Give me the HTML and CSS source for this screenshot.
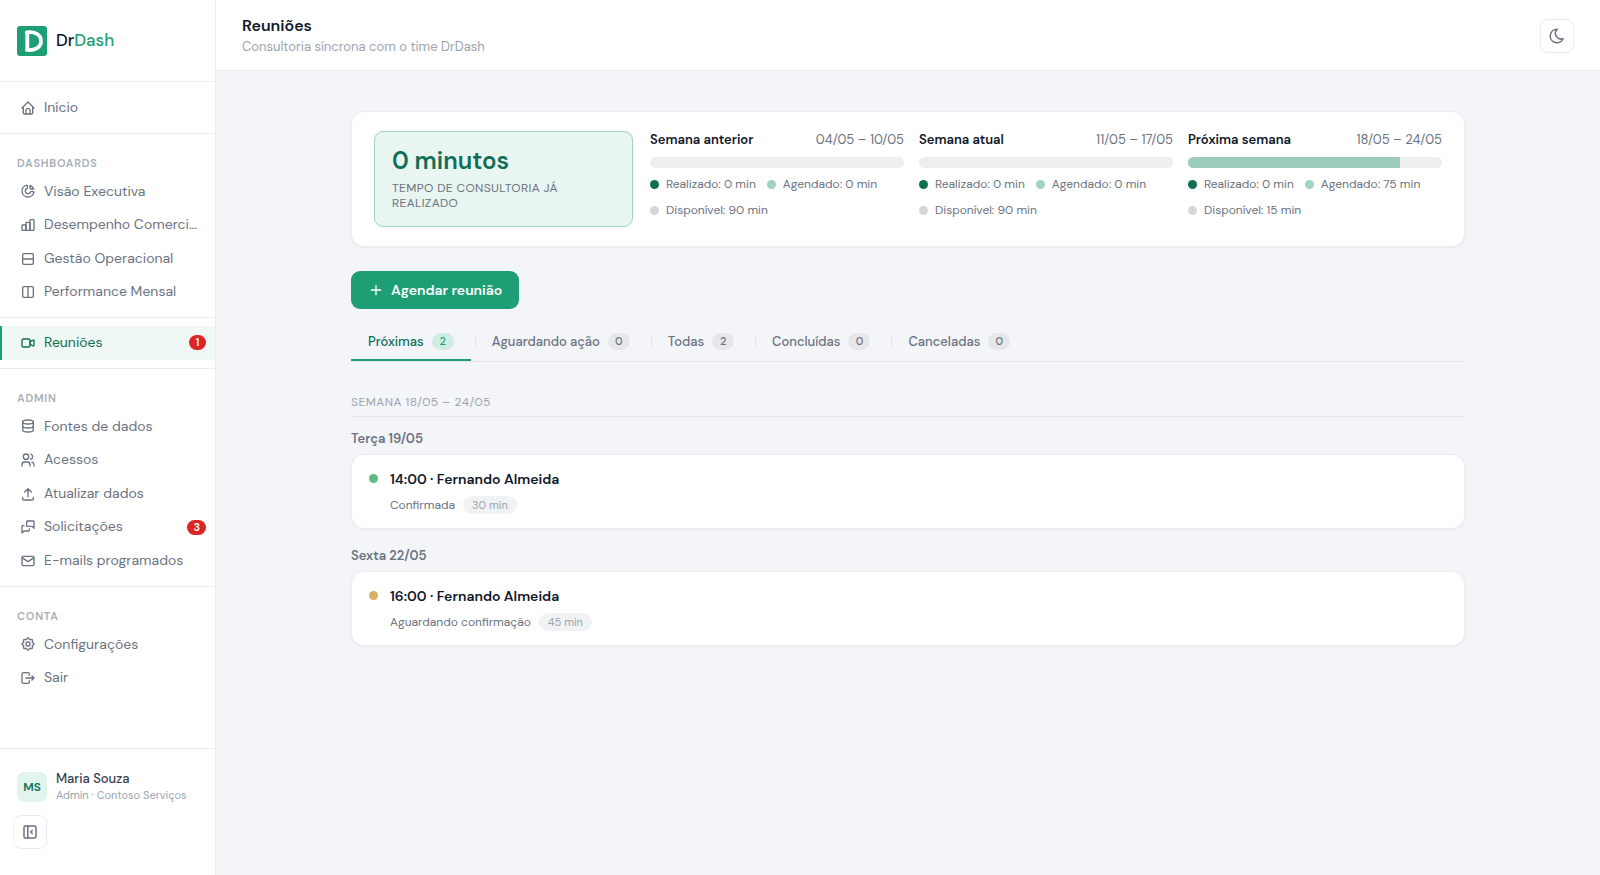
FILE: index.html
```html
<!DOCTYPE html>
<html lang="pt-BR">
<head>
<meta charset="utf-8">
<meta name="viewport" content="width=device-width, initial-scale=1">
<title>Reuniões · DrDash</title>
<link rel="stylesheet" href="styles.css">
</head>
<body>
<div class="app">
  <aside class="sidebar">
    <a class="brand" href="#">
      <svg class="brand-mark" viewBox="0 0 30 30" aria-hidden="true">
        <rect width="30" height="30" rx="3" fill="#1d9e75"/>
        <path d="M10.300 7v16.500M9.600 6.300C18 5.300 24 8.500 24 14.900C24 21.300 18 24.800 9.900 23.900" fill="none" stroke="#fff" stroke-width="3.800" stroke-linecap="round" stroke-linejoin="round"/>
      </svg>
      <span class="brand-name">Dr<span class="brand-accent">Dash</span></span>
    </a>
    <nav class="nav" aria-label="Principal">
      <a class="nav-item" href="#"><svg class="icon" viewBox="0 0 24 24"><path d="M5 12H3l9-9 9 9h-2"/><path d="M5 12v7a2 2 0 0 0 2 2h10a2 2 0 0 0 2-2v-7"/><path d="M9 21v-6a2 2 0 0 1 2-2h2a2 2 0 0 1 2 2v6"/></svg><span class="nav-text">Início</span></a>
      <hr class="divider">
      <h2 class="nav-label">Dashboards</h2>
      <a class="nav-item" href="#"><svg class="icon" viewBox="0 0 24 24"><path d="M10 3.200A9 9 0 1 0 20.800 14a1 1 0 0 0-1-1H16a4.100 4.100 0 1 1-5-5V4a.9.9 0 0 0-1-.8"/><path d="M15 3.500A9 9 0 0 1 20.500 9H16a9 9 0 0 0-1-1z"/></svg><span class="nav-text">Visão Executiva</span></a>
      <a class="nav-item" href="#"><svg class="icon" viewBox="0 0 24 24"><rect x="3" y="12" width="6" height="8" rx="1"/><rect x="9" y="8" width="6" height="12" rx="1"/><rect x="15" y="4" width="6" height="16" rx="1"/></svg><span class="nav-text">Desempenho Comercial</span></a>
      <a class="nav-item" href="#"><svg class="icon" viewBox="0 0 24 24"><rect x="4" y="4" width="16" height="16" rx="2"/><path d="M4 12h16"/></svg><span class="nav-text">Gestão Operacional</span></a>
      <a class="nav-item" href="#"><svg class="icon" viewBox="0 0 24 24"><rect x="4" y="4" width="16" height="16" rx="2"/><path d="M12 4v16"/></svg><span class="nav-text">Performance Mensal</span></a>
      <hr class="divider">
      <a class="nav-item is-active" href="#" aria-current="page"><svg class="icon" viewBox="0 0 24 24"><path d="M15 10l4.553-2.276A1 1 0 0 1 21 8.618v6.764a1 1 0 0 1-1.447.894L15 14z"/><rect x="3" y="6" width="12" height="12" rx="2"/></svg><span class="nav-text">Reuniões</span><span class="alert">1</span></a>
      <hr class="divider">
      <h2 class="nav-label">Admin</h2>
      <a class="nav-item" href="#"><svg class="icon" viewBox="0 0 24 24"><ellipse cx="12" cy="6" rx="8" ry="3"/><path d="M4 6v6c0 1.657 3.582 3 8 3s8-1.343 8-3V6"/><path d="M4 12v6c0 1.657 3.582 3 8 3s8-1.343 8-3v-6"/></svg><span class="nav-text">Fontes de dados</span></a>
      <a class="nav-item" href="#"><svg class="icon" viewBox="0 0 24 24"><circle cx="9" cy="7" r="4"/><path d="M3 21v-2a4 4 0 0 1 4-4h4a4 4 0 0 1 4 4v2M16 3.130a4 4 0 0 1 0 7.750M21 21v-2a4 4 0 0 0-3-3.850"/></svg><span class="nav-text">Acessos</span></a>
      <a class="nav-item" href="#"><svg class="icon" viewBox="0 0 24 24"><path d="M4 17v2a2 2 0 0 0 2 2h12a2 2 0 0 0 2-2v-2M7 9l5-5 5 5M12 4v12"/></svg><span class="nav-text">Atualizar dados</span></a>
      <a class="nav-item" href="#"><svg class="icon" viewBox="0 0 24 24"><path d="M21 14l-3-3h-7a1 1 0 0 1-1-1V4a1 1 0 0 1 1-1h9a1 1 0 0 1 1 1v10"/><path d="M14 15v2a1 1 0 0 1-1 1H6l-3 3V11a1 1 0 0 1 1-1h2"/></svg><span class="nav-text">Solicitações</span><span class="alert">3</span></a>
      <a class="nav-item" href="#"><svg class="icon" viewBox="0 0 24 24"><rect x="3" y="5" width="18" height="14" rx="2"/><path d="M3 7l9 6 9-6"/></svg><span class="nav-text">E-mails programados</span></a>
      <hr class="divider">
      <h2 class="nav-label">Conta</h2>
      <a class="nav-item" href="#"><svg class="icon" viewBox="0 0 24 24"><path d="M10.325 4.317c.426-1.756 2.924-1.756 3.350 0a1.724 1.724 0 0 0 2.573 1.066c1.543-.94 3.310.826 2.370 2.370a1.724 1.724 0 0 0 1.065 2.572c1.756.426 1.756 2.924 0 3.350a1.724 1.724 0 0 0-1.066 2.573c.94 1.543-.826 3.310-2.370 2.370a1.724 1.724 0 0 0-2.572 1.065c-.426 1.756-2.924 1.756-3.350 0a1.724 1.724 0 0 0-2.573-1.066c-1.543.94-3.310-.826-2.370-2.370a1.724 1.724 0 0 0-1.065-2.572c-1.756-.426-1.756-2.924 0-3.350a1.724 1.724 0 0 0 1.066-2.573c-.94-1.543.826-3.310 2.370-2.370 1 .608 2.296.07 2.572-1.065z"/><circle cx="12" cy="12" r="3"/></svg><span class="nav-text">Configurações</span></a>
      <a class="nav-item" href="#"><svg class="icon" viewBox="0 0 24 24"><path d="M14 8V6a2 2 0 0 0-2-2H5a2 2 0 0 0-2 2v12a2 2 0 0 0 2 2h7a2 2 0 0 0 2-2v-2M9 12h12l-3-3M18 15l3-3"/></svg><span class="nav-text">Sair</span></a>
    </nav>
    <div class="sidebar-foot">
      <div class="user">
        <span class="avatar">MS</span>
        <div class="user-info">
          <div class="user-name">Maria Souza</div>
          <div class="user-role">Admin · Contoso Serviços</div>
        </div>
      </div>
      <button class="icon-button" type="button" aria-label="Recolher menu"><svg class="icon" viewBox="0 0 24 24"><rect x="4" y="4" width="16" height="16" rx="2"/><path d="M9 4v16M15 10l-2 2 2 2"/></svg></button>
    </div>
  </aside>

  <div class="page">
    <header class="topbar">
      <div>
        <h1 class="page-title">Reuniões</h1>
        <p class="page-subtitle">Consultoria síncrona com o time DrDash</p>
      </div>
      <button class="icon-button" type="button" aria-label="Alternar tema"><svg class="icon" viewBox="0 0 24 24"><path d="M12 3h.393a7.500 7.500 0 0 0 7.920 12.446A9 9 0 1 1 12 2.992z"/></svg></button>
    </header>

    <main class="content">
      <section class="card summary">
        <div class="total">
          <div class="total-value">0 minutos</div>
          <div class="total-label">Tempo de consultoria já realizado</div>
        </div>
        <div class="weeks">
          <div class="week">
            <div class="week-head"><h3 class="week-name">Semana anterior</h3><span class="week-range">04/05 – 10/05</span></div>
            <div class="bar"></div>
            <ul class="legend"><li class="legend-item"><i class="dot dot-done"></i>Realizado: 0 min</li><li class="legend-item"><i class="dot dot-booked"></i>Agendado: 0 min</li><li class="legend-item"><i class="dot dot-free"></i>Disponível: 90 min</li></ul>
          </div>
          <div class="week">
            <div class="week-head"><h3 class="week-name">Semana atual</h3><span class="week-range">11/05 – 17/05</span></div>
            <div class="bar"></div>
            <ul class="legend"><li class="legend-item"><i class="dot dot-done"></i>Realizado: 0 min</li><li class="legend-item"><i class="dot dot-booked"></i>Agendado: 0 min</li><li class="legend-item"><i class="dot dot-free"></i>Disponível: 90 min</li></ul>
          </div>
          <div class="week">
            <div class="week-head"><h3 class="week-name">Próxima semana</h3><span class="week-range">18/05 – 24/05</span></div>
            <div class="bar"><div class="bar-fill" style="width:83.33%"></div></div>
            <ul class="legend"><li class="legend-item"><i class="dot dot-done"></i>Realizado: 0 min</li><li class="legend-item"><i class="dot dot-booked"></i>Agendado: 75 min</li><li class="legend-item"><i class="dot dot-free"></i>Disponível: 15 min</li></ul>
          </div>
        </div>
      </section>

      <button class="primary" type="button"><svg class="icon" viewBox="0 0 24 24"><path d="M12 5v14M5 12h14"/></svg>Agendar reunião</button>

      <div class="tabs" role="tablist">
        <button class="tab is-selected" type="button" role="tab" aria-selected="true">Próximas<span class="count">2</span></button>
        <button class="tab" type="button" role="tab" aria-selected="false">Aguardando ação<span class="count">0</span></button>
        <button class="tab" type="button" role="tab" aria-selected="false">Todas<span class="count">2</span></button>
        <button class="tab" type="button" role="tab" aria-selected="false">Concluídas<span class="count">0</span></button>
        <button class="tab" type="button" role="tab" aria-selected="false">Canceladas<span class="count">0</span></button>
      </div>

      <h2 class="week-title">Semana 18/05 – 24/05</h2>
      <section class="day">
        <h3 class="day-title">Terça 19/05</h3>
        <article class="card meeting">
          <i class="dot dot-confirmed"></i>
          <div>
            <h4 class="meeting-title">14:00 · Fernando Almeida</h4>
            <div class="meeting-meta">Confirmada<span class="duration">30 min</span></div>
          </div>
        </article>
      </section>
      <section class="day">
        <h3 class="day-title">Sexta 22/05</h3>
        <article class="card meeting">
          <i class="dot dot-pending"></i>
          <div>
            <h4 class="meeting-title">16:00 · Fernando Almeida</h4>
            <div class="meeting-meta">Aguardando confirmação<span class="duration">45 min</span></div>
          </div>
        </article>
      </section>
    </main>
  </div>
</div>
</body>
</html>
```

FILE: styles.css
```css
:root {
  --green: #1d9e75;
  --green-dark: #0f6e56;
  --ink: #0f172a;
  --text: #6b7280;
  --muted: #9ca3af;
  --line: #ebedef;
  --bg: #f3f5f9;
}

* { box-sizing: border-box; }

body {
  margin: 0;
  background: var(--bg);
  color: var(--text);
  font-family: "DM Sans", Inter, "Open Sans", sans-serif;
  font-size: 14px;
  line-height: 1.4;
}

h1, h2, h3, h4, p, ul { margin: 0; padding: 0; }
ul { list-style: none; }
a { color: inherit; text-decoration: none; }
button { font: inherit; color: inherit; cursor: pointer; }

.app { display: flex; min-height: 100vh; }

.icon {
  width: 16px;
  height: 16px;
  flex: none;
  fill: none;
  stroke: currentColor;
  stroke-width: 2;
  stroke-linecap: round;
  stroke-linejoin: round;
}

/* Sidebar */
.sidebar {
  display: flex;
  flex-direction: column;
  flex: none;
  width: 216px;
  background: #fff;
  border-right: 1px solid var(--line);
}

.brand {
  display: flex;
  align-items: center;
  gap: 9px;
  padding: 26px 17px 25px;
  border-bottom: 1px solid var(--line);
}
.brand-mark { width: 30px; height: 30px; }
.brand-name { color: var(--ink); font-size: 17px; font-weight: 500; }
.brand-accent { color: var(--green); }

.nav { flex: 1; padding-top: 9px; }

.nav-item {
  display: flex;
  align-items: center;
  gap: 8px;
  padding: 7px 9px 7px 18px;
  border-left: 2px solid transparent;
}
.nav-text {
  flex: 1;
  overflow: hidden;
  padding-right: 7px;
  text-overflow: ellipsis;
  white-space: nowrap;
}
.nav-item.is-active {
  color: var(--green-dark);
  background: #f0f8f5;
  border-left-color: var(--green);
}

.alert {
  min-width: 17px;
  padding: 0 6px;
  border-radius: 8px;
  background: #dc2626;
  color: #fff;
  font-size: 11px;
  font-weight: 600;
  line-height: 15px;
  text-align: center;
}

.divider { margin: 8px 0; border: 0; border-top: 1px solid var(--line); }

.nav-label {
  padding: 14px 17px 5px;
  color: #a7adb7;
  font-size: 11px;
  font-weight: 600;
  line-height: 14px;
  letter-spacing: 0.07em;
  text-transform: uppercase;
}

.sidebar-foot {
  padding: 22px 13px 26px;
  border-top: 1px solid var(--line);
}
.user { display: flex; align-items: center; gap: 9px; padding: 0 4px; margin-bottom: 12px; }
.avatar {
  display: grid;
  place-items: center;
  flex: none;
  width: 30px;
  height: 30px;
  border-radius: 7px;
  background: #e1f5ee;
  color: var(--green-dark);
  font-size: 12px;
  font-weight: 600;
}
.user-info { line-height: 16px; white-space: nowrap; }
.user-name { color: #374151; font-size: 13px; font-weight: 500; }
.user-role { color: var(--muted); font-size: 11px; }

.icon-button {
  display: grid;
  place-items: center;
  width: 34px;
  height: 34px;
  padding: 0;
  border: 1px solid var(--line);
  border-radius: 8px;
  background: #fff;
}
.icon-button .icon { width: 18px; height: 18px; }

/* Top bar */
.page { flex: 1; min-width: 0; }
.topbar {
  display: flex;
  align-items: center;
  justify-content: space-between;
  padding: 15px 26px 14px;
  background: #fff;
  border-bottom: 1px solid var(--line);
}
.page-title { color: var(--ink); font-size: 16px; font-weight: 600; line-height: 22px; }
.page-subtitle { margin-top: 1px; color: var(--muted); font-size: 13px; line-height: 18px; }

.content { max-width: 1166px; margin: 0 auto; padding: 40px 26px; }

.card {
  background: #fff;
  border: 1px solid var(--line);
  border-radius: 13px;
  box-shadow: 0 1px 3px rgba(15, 23, 42, 0.05);
}

/* Summary */
.summary {
  display: grid;
  grid-template-columns: 259px 1fr;
  gap: 17px;
  margin-bottom: 24px;
  padding: 19px 22px;
}
.total {
  padding: 12px 17px 15px;
  border: 1px solid #9fd4c0;
  border-radius: 9px;
  background: #e8f5f0;
}
.total-value { color: var(--green-dark); font-size: 24px; font-weight: 600; line-height: 34px; }
.total-label {
  margin-top: 3px;
  font-size: 12px;
  line-height: 15px;
  letter-spacing: 0.03em;
  text-transform: uppercase;
}
.weeks { display: grid; grid-template-columns: repeat(3, 1fr); gap: 15px; }
.week-head { display: flex; justify-content: space-between; font-size: 13px; line-height: 18px; }
.week-name { color: var(--ink); font-size: 13px; font-weight: 600; }
.bar {
  height: 11px;
  margin: 8px 0 7px;
  overflow: hidden;
  border-radius: 6px;
  background: #eee;
}
.bar-fill { height: 100%; background: #9bcdba; }
.legend {
  display: flex;
  flex-wrap: wrap;
  gap: 8px 11px;
  font-size: 12px;
  line-height: 18px;
}
.legend-item { display: flex; align-items: center; gap: 7px; }

.dot { flex: none; width: 9px; height: 9px; border-radius: 50%; }
.dot-done { background: var(--green-dark); }
.dot-booked { background: #9fd4c0; }
.dot-free { background: #d6d6d6; }
.dot-confirmed { background: #5fbb80; }
.dot-pending { background: #d9b063; }

.primary {
  display: inline-flex;
  align-items: center;
  gap: 7px;
  padding: 9px 17px;
  border: 0;
  border-radius: 9px;
  background: var(--green);
  color: #fff;
  font-weight: 600;
  line-height: 20px;
}

/* Tabs */
.tabs {
  display: flex;
  gap: 4px;
  margin-top: 14px;
  border-bottom: 1px solid #e2e5e9;
}
.tab {
  position: relative;
  display: flex;
  align-items: center;
  gap: 8px;
  padding: 10px 17px 9px;
  border: 0;
  border-bottom: 2px solid transparent;
  background: none;
  font-size: 13px;
  font-weight: 500;
  line-height: 17px;
}
.tab + .tab::before {
  position: absolute;
  left: 0;
  width: 1px;
  height: 12px;
  background: #e2e5e9;
  content: "";
}
.tab.is-selected { color: var(--green-dark); border-bottom-color: var(--green); }
.count {
  min-width: 22px;
  padding: 0 7px;
  border-radius: 9px;
  background: #e5e7eb;
  font-size: 11px;
  text-align: center;
}
.is-selected .count { background: #d0ede3; color: var(--green); }

/* Meetings */
.week-title {
  margin-top: 31px;
  padding: 0 0 5px;
  border-bottom: 1px solid #e5e8ec;
  color: var(--muted);
  font-size: 12px;
  font-weight: 400;
  line-height: 18px;
  letter-spacing: 0.04em;
  text-transform: uppercase;
}
.day { margin-top: 13px; }
.day + .day { margin-top: 18px; }
.day-title { margin-bottom: 6px; font-size: 13px; font-weight: 600; line-height: 18px; }
.meeting { display: flex; align-items: flex-start; gap: 12px; padding: 14px 17px; }
.meeting .dot { margin-top: 5px; }
.meeting-title { color: var(--ink); font-size: 14px; font-weight: 600; line-height: 20px; }
.meeting-meta {
  display: flex;
  align-items: center;
  gap: 8px;
  margin-top: 7px;
  font-size: 12px;
  line-height: 18px;
}
.duration {
  padding: 0 9px;
  border-radius: 9px;
  background: #f1f2f3;
  color: var(--muted);
  font-size: 11px;
}
```
